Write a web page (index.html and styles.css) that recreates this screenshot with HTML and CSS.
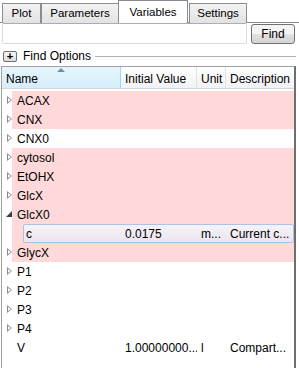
FILE: index.html
```html
<!DOCTYPE html>
<html lang="en">

<head>
    <meta charset="UTF-8" />
    <title>Variables</title>
    <link rel="stylesheet" href="styles.css">
</head>

<body>
    <div class="tabs">
        <div class="tab tab-plot">Plot</div>
        <div class="tab tab-params">Parameters</div>
        <div class="tab tab-vars active">Variables</div>
        <div class="tab tab-settings">Settings</div>
    </div>
    <div class="pane">
        <div class="search">
            <div class="search-field"></div>
            <div class="find-btn">Find</div>
        </div>
        <div class="options">
            <span class="plus">+</span>
            <span class="options-label">Find Options</span>
            <span class="options-line"></span>
        </div>
        <div class="tree">
            <div class="header">
                <div class="hcell col-name sorted">Name<span class="sort-arrow"></span></div>
                <div class="hcell col-value">Initial Value</div>
                <div class="hcell col-unit">Unit</div>
                <div class="hcell col-desc">Description</div>
            </div>
            <div class="rows">
                <div class="row pink"><span class="arrow"></span><span class="name">ACAX</span></div>
                <div class="row pink"><span class="arrow"></span><span class="name">CNX</span></div>
                <div class="row"><span class="arrow"></span><span class="name">CNX0</span></div>
                <div class="row pink"><span class="arrow"></span><span class="name">cytosol</span></div>
                <div class="row pink"><span class="arrow"></span><span class="name">EtOHX</span></div>
                <div class="row pink"><span class="arrow"></span><span class="name">GlcX</span></div>
                <div class="row pink"><span class="arrow open"></span><span class="name">GlcX0</span></div>
                <div class="row pink child">
                    <div class="selected">
                        <span class="cell sel-name">c</span>
                        <span class="cell col-value">0.0175</span>
                        <span class="cell col-unit">m...</span>
                        <span class="cell col-desc">Current c...</span>
                    </div>
                </div>
                <div class="row pink"><span class="arrow"></span><span class="name">GlycX</span></div>
                <div class="row"><span class="arrow"></span><span class="name">P1</span></div>
                <div class="row"><span class="arrow"></span><span class="name">P2</span></div>
                <div class="row"><span class="arrow"></span><span class="name">P3</span></div>
                <div class="row"><span class="arrow"></span><span class="name">P4</span></div>
                <div class="row">
                    <span class="no-arrow"></span><span class="name leaf">V</span>
                    <span class="cell col-value">1.00000000...</span>
                    <span class="cell col-unit">l</span>
                    <span class="cell col-desc">Compart...</span>
                </div>
            </div>
        </div>
    </div>
</body>

</html>
```

FILE: styles.css
```css
* {
    box-sizing: border-box;
}

body {
    margin: 0;
    width: 299px;
    height: 368px;
    overflow: hidden;
    background-color: #ffffff;
    font-family: "Liberation Sans", Arial, sans-serif;
    font-size: 12px;
    color: #000000;
}

/* tabs */

.tabs {
    display: flex;
    align-items: flex-end;
    height: 23px;
    padding-left: 2px;
    position: relative;
    z-index: 1;
}

.tab {
    height: 20px;
    border: 1px solid #898c95;
    border-bottom: none;
    background: linear-gradient(#f3f3f3, #e2e2e2);
    font-size: 11.5px;
    display: flex;
    align-items: center;
    justify-content: center;
    padding-bottom: 2px;
}

.tab-plot {
    width: 39px;
}

.tab-params {
    width: 78px;
}

.tab-vars {
    width: 70px;
    margin-left: -1px;
}

.tab-settings {
    width: 58px;
    margin-left: 1px;
}

.tab.active {
    height: 23px;
    background: #ffffff;
    padding-bottom: 1px;
}

.pane {
    border-top: 1px solid #898c95;
    margin-top: -1px;
}

/* search */

.search {
    display: flex;
    align-items: flex-start;
    padding-left: 2px;
}

.search-field {
    width: 245px;
    height: 21px;
    border: 1px solid #d9dce2;
    border-top-color: #abadb3;
    border-radius: 2px;
    background: #ffffff;
}

.find-btn {
    width: 44px;
    height: 20px;
    margin-left: 4px;
    margin-top: 1px;
    border: 1px solid #707070;
    border-radius: 3px;
    background: linear-gradient(#f4f4f4 50%, #e2e2e2 50%, #d4d4d4);
    display: flex;
    align-items: center;
    justify-content: center;
}

/* find options */

.options {
    display: flex;
    align-items: center;
    height: 18px;
    margin-top: 3px;
    padding-left: 3px;
}

.plus {
    width: 14px;
    height: 11px;
    border: 1px solid #707070;
    border-radius: 2px;
    background: linear-gradient(#f6f6f6, #dcdcdc);
    font-size: 11px;
    line-height: 8px;
    text-align: center;
    font-weight: bold;
}

.options-label {
    margin-left: 6px;
    font-size: 12px;
}

.options-line {
    flex-grow: 1;
    height: 1px;
    background: #b0b0b0;
    margin: 0 3px 0 4px;
}

/* tree */

.tree {
    margin: 1px 3px 0 1px;
    height: 303px;
    border: 1px solid #a0a0a0;
    border-right: 2px solid #6e6e6e;
    border-bottom: none;
}

.header {
    display: flex;
    height: 22px;
    border-bottom: 1px solid #d5d5d5;
    background: linear-gradient(#ffffff, #f1f2f4);
}

.hcell {
    display: flex;
    align-items: center;
    padding-left: 4px;
    padding-top: 2px;
    border-right: 1px solid #dfe2e8;
    white-space: nowrap;
    overflow: hidden;
}

.hcell.sorted {
    background: linear-gradient(#e6f5fc, #d5eefb);
    border-right-color: #96d9f9;
    position: relative;
}

.sort-arrow {
    position: absolute;
    left: 55px;
    top: 1px;
    width: 0;
    height: 0;
    border-left: 4px solid transparent;
    border-right: 4px solid transparent;
    border-bottom: 4px solid #6a8fb0;
}

.col-name {
    width: 119px;
}

.col-value {
    width: 76px;
}

.col-unit {
    width: 29px;
}

.col-desc {
    flex-grow: 1;
    border-right: none;
}

.rows {
    padding-top: 2px;
}

.row {
    display: flex;
    align-items: center;
    height: 19px;
    white-space: nowrap;
}

.row.pink {
    background: linear-gradient(to right, #ffffff 10px, #ffd9d9 10px);
}

.arrow {
    width: 10px;
    height: 19px;
    margin-left: 4px;
    position: relative;
    flex-shrink: 0;
}

.arrow::before {
    content: "";
    position: absolute;
    left: 1px;
    top: 5px;
    border-top: 4px solid transparent;
    border-bottom: 4px solid transparent;
    border-left: 5px solid #8a8a8a;
}

.arrow::after {
    content: "";
    position: absolute;
    left: 2px;
    top: 7px;
    border-top: 2px solid transparent;
    border-bottom: 2px solid transparent;
    border-left: 3px solid #ffffff;
}

.arrow.open::before {
    left: 0;
    top: 6px;
    border: none;
    border-left: 6px solid transparent;
    border-bottom: 6px solid #3c3c3c;
}

.arrow.open::after {
    display: none;
}

.no-arrow {
    width: 10px;
    margin-left: 4px;
    flex-shrink: 0;
}

.name {
    padding-left: 1px;
    width: 105px;
}

.name.leaf {
    width: 105px;
}

.cell {
    padding-left: 4px;
    overflow: hidden;
}

.child {
    padding-left: 21px;
}

.selected {
    display: flex;
    align-items: center;
    flex-grow: 1;
    height: 19px;
    border: 1px solid #a9c4eb;
    border-radius: 2px;
    background: linear-gradient(#f7f3f8, #ece5ee);
}

.sel-name {
    width: 97px;
    padding-left: 2px;
}

.selected .col-value {
    width: 76px;
}
```
